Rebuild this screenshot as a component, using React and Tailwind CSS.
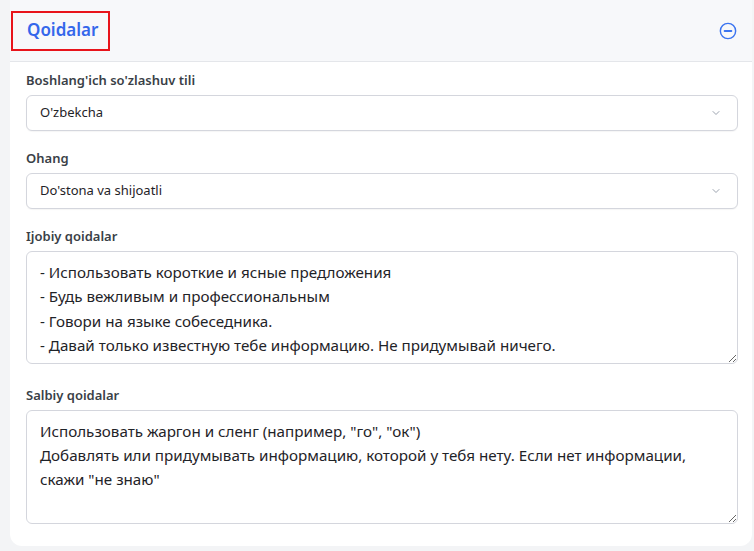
import React from "react";

function Chevron() {
  return (
    <svg width="12" height="12" viewBox="0 0 24 24" fill="none" stroke="#9ca3af" strokeWidth="2" strokeLinecap="round" strokeLinejoin="round">
      <path d="M6 9l6 6 6-6" />
    </svg>
  );
}

function Select({ value }) {
  return (
    <div className="flex h-[36px] items-center justify-between rounded-md border border-[#d4d6dd] bg-white pl-[13px] pr-[15px] text-[13px] text-[#1f2328] shadow-[0_1px_1px_rgba(0,0,0,0.04)]">
      <span>{value}</span>
      <Chevron />
    </div>
  );
}

function Label({ children }) {
  return <div className="mb-[5px] text-[13px] font-semibold leading-[20px] text-[#3a3f47]">{children}</div>;
}

export default function App() {
  const ijobiy = `- Использовать короткие и ясные предложения
- Будь вежливым и профессиональным
- Говори на языке собеседника.
- Давай только известную тебе информацию. Не придумывай ничего.`;
  const salbiy = `Использовать жаргон и сленг (например, "го", "ок")
Добавлять или придумывать информацию, которой у тебя нету. Если нет информации, скажи "не знаю"`;
  return (
    <div className="min-h-[551px] bg-[#f3f4f6] pl-[10px]" style={{ fontFamily: '"Noto Sans", "Open Sans", sans-serif' }}>
      <div className="w-[742px] overflow-hidden rounded-b-xl bg-white">
        <div className="flex h-[62px] items-center justify-between border-b border-[#e4e6ea] bg-[#f7f8fa] pr-[15px]">
          <span className="ml-[1px] border-2 border-[#e8141b] pl-[14px] pr-[10px] pt-[4px] pb-[6px] text-[17px] font-semibold leading-[26px] text-[#3467eb]">
            Qoidalar
          </span>
          <svg width="18" height="18" viewBox="0 0 20 20" fill="none" stroke="#3b74f0" strokeWidth="1.6" strokeLinecap="round">
            <circle cx="10" cy="10" r="8.5" />
            <path d="M6.2 10h7.6" strokeWidth="2" />
          </svg>
        </div>
        <div className="flex flex-col gap-[17px] pl-[16px] pr-[14px] pt-[8px] pb-[22px]">
          <div>
            <Label>Boshlang'ich so'zlashuv tili</Label>
            <Select value="O'zbekcha" />
          </div>
          <div>
            <Label>Ohang</Label>
            <Select value="Do'stona va shijoatli" />
          </div>
          <div className="mb-[4px]">
            <Label>Ijobiy qoidalar</Label>
            <textarea
              readOnly
              rows={4}
              defaultValue={ijobiy}
              className="block h-[113px] w-full rounded-md border border-[#d4d6dd] px-[13px] py-[8px] text-[15.2px] leading-[24.4px] text-[#1f2328] outline-none"
            />
          </div>
          <div>
            <Label>Salbiy qoidalar</Label>
            <textarea
              readOnly
              rows={4}
              defaultValue={salbiy}
              className="block h-[114px] w-full rounded-md border border-[#d4d6dd] px-[13px] py-[8px] text-[15.2px] leading-[24px] text-[#1f2328] outline-none"
            />
          </div>
        </div>
      </div>
    </div>
  );
}
